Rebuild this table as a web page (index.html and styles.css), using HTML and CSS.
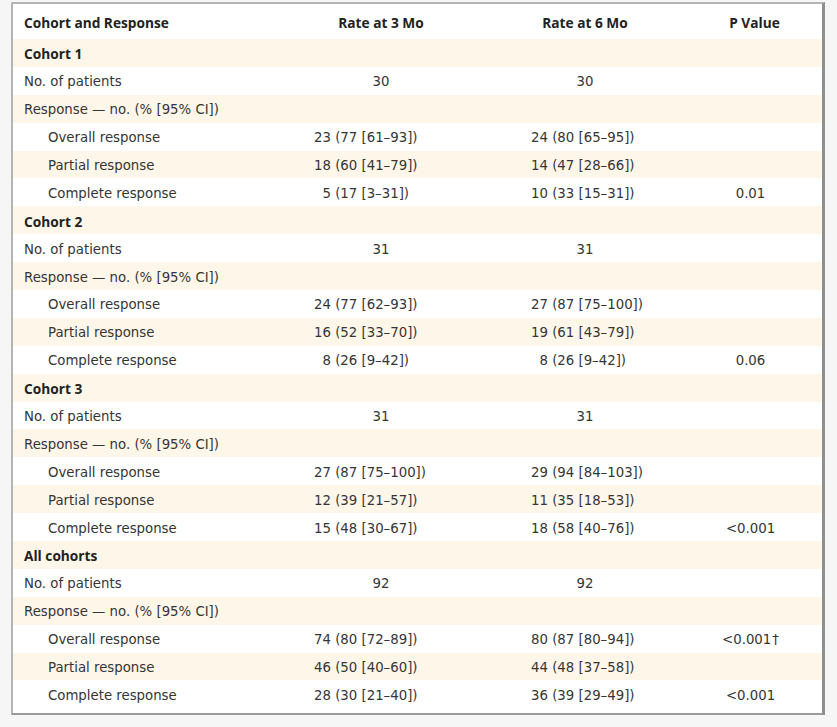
FILE: index.html
```html
<!DOCTYPE html>
<html lang="en">
<head>
<meta charset="utf-8">
<title>Response Rates by Cohort</title>
<link rel="stylesheet" href="styles.css">
</head>
<body>
<div class="box">
  <div class="row head">
    <div class="c1">Cohort and Response</div>
    <div class="c2">Rate at 3 Mo</div>
    <div class="c3">Rate at 6 Mo</div>
    <div class="c4">P Value</div>
  </div>

  <div class="row group"><div class="c1">Cohort 1</div></div>
  <div class="row"><div class="c1">No. of patients</div><div class="c2 cnt">30</div><div class="c3 cnt">30</div><div class="c4"></div></div>
  <div class="row"><div class="c1">Response — no. (% [95% CI])</div></div>
  <div class="row"><div class="c1 ind">Overall response</div><div class="c2 val"><span class="n">23</span> (77 [61–93])</div><div class="c3 val"><span class="n">24</span> (80 [65–95])</div><div class="c4"></div></div>
  <div class="row"><div class="c1 ind">Partial response</div><div class="c2 val"><span class="n">18</span> (60 [41–79])</div><div class="c3 val"><span class="n">14</span> (47 [28–66])</div><div class="c4"></div></div>
  <div class="row"><div class="c1 ind">Complete response</div><div class="c2 val"><span class="n">5</span> (17 [3–31])</div><div class="c3 val"><span class="n">10</span> (33 [15–31])</div><div class="c4 p">0.01</div></div>

  <div class="row group"><div class="c1">Cohort 2</div></div>
  <div class="row"><div class="c1">No. of patients</div><div class="c2 cnt">31</div><div class="c3 cnt">31</div><div class="c4"></div></div>
  <div class="row"><div class="c1">Response — no. (% [95% CI])</div></div>
  <div class="row"><div class="c1 ind">Overall response</div><div class="c2 val"><span class="n">24</span> (77 [62–93])</div><div class="c3 val"><span class="n">27</span> (87 [75–100])</div><div class="c4"></div></div>
  <div class="row"><div class="c1 ind">Partial response</div><div class="c2 val"><span class="n">16</span> (52 [33–70])</div><div class="c3 val"><span class="n">19</span> (61 [43–79])</div><div class="c4"></div></div>
  <div class="row"><div class="c1 ind">Complete response</div><div class="c2 val"><span class="n">8</span> (26 [9–42])</div><div class="c3 val"><span class="n">8</span> (26 [9–42])</div><div class="c4 p">0.06</div></div>

  <div class="row group"><div class="c1">Cohort 3</div></div>
  <div class="row"><div class="c1">No. of patients</div><div class="c2 cnt">31</div><div class="c3 cnt">31</div><div class="c4"></div></div>
  <div class="row"><div class="c1">Response — no. (% [95% CI])</div></div>
  <div class="row"><div class="c1 ind">Overall response</div><div class="c2 val"><span class="n">27</span> (87 [75–100])</div><div class="c3 val"><span class="n">29</span> (94 [84–103])</div><div class="c4"></div></div>
  <div class="row"><div class="c1 ind">Partial response</div><div class="c2 val"><span class="n">12</span> (39 [21–57])</div><div class="c3 val"><span class="n">11</span> (35 [18–53])</div><div class="c4"></div></div>
  <div class="row"><div class="c1 ind">Complete response</div><div class="c2 val"><span class="n">15</span> (48 [30–67])</div><div class="c3 val"><span class="n">18</span> (58 [40–76])</div><div class="c4 p">&lt;0.001</div></div>

  <div class="row group"><div class="c1">All cohorts</div></div>
  <div class="row"><div class="c1">No. of patients</div><div class="c2 cnt">92</div><div class="c3 cnt">92</div><div class="c4"></div></div>
  <div class="row"><div class="c1">Response — no. (% [95% CI])</div></div>
  <div class="row"><div class="c1 ind">Overall response</div><div class="c2 val"><span class="n">74</span> (80 [72–89])</div><div class="c3 val"><span class="n">80</span> (87 [80–94])</div><div class="c4 p">&lt;0.001<span class="dag">†</span></div></div>
  <div class="row"><div class="c1 ind">Partial response</div><div class="c2 val"><span class="n">46</span> (50 [40–60])</div><div class="c3 val"><span class="n">44</span> (48 [37–58])</div><div class="c4"></div></div>
  <div class="row"><div class="c1 ind">Complete response</div><div class="c2 val"><span class="n">28</span> (30 [21–40])</div><div class="c3 val"><span class="n">36</span> (39 [29–49])</div><div class="c4 p">&lt;0.001</div></div>
</div>
</body>
</html>
```

FILE: styles.css
```css
html, body {
  margin: 0;
  padding: 0;
  background: #f6f6f6;
}

body {
  font-family: "DejaVu Sans", "Open Sans", sans-serif;
  font-size: 13.3px;
  color: #353535;
}

.box {
  box-sizing: border-box;
  width: 814px;
  margin: 2px 0 0 11px;
  background: #fff;
  border: 2px solid #b4b4b4;
  border-right: 3px solid #8e8e8e;
  border-bottom: 2px solid #9a9a9a;
  padding-bottom: 5px;
}

.row {
  display: grid;
  grid-template-columns: 266px 204px 204px 1fr;
  align-items: center;
  height: 27.9px;
}

.row > div {
  white-space: nowrap;
  padding-top: 2px;
}

.row:nth-child(even) {
  background: #fef7e9;
}

.row.head {
  height: 35px;
}

.row.head > div,
.group .c1 {
  font-family: "Open Sans", "DejaVu Sans", sans-serif;
  font-size: 13.7px;
  font-weight: 700;
  color: #222;
}

.row.head > div {
  padding-top: 1px;
}

.row.head .c2,
.row.head .c3,
.row.head .c4 {
  text-align: center;
}

.c1 {
  padding-left: 11px;
}

.c1.ind {
  padding-left: 35px;
}

.cnt {
  text-align: center;
}

.c2.val {
  padding-left: 35px;
}

.c3.val {
  padding-left: 48px;
}

.n {
  display: inline-block;
  min-width: 2ch;
  text-align: right;
}

.p {
  text-align: center;
  padding-right: 8px;
}

.dag {
  margin-left: 1px;
}
```
